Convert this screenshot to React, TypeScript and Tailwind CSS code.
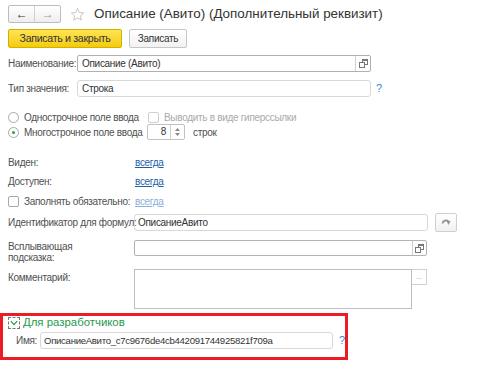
import React from 'react';

function OpenIcon() {
  return (
    <svg width="9" height="9" viewBox="0 0 9 9" className="block">
      <rect x="3.5" y="0.5" width="5" height="5" fill="none" stroke="#777" />
      <rect x="0.5" y="3.5" width="5" height="5" fill="#fff" stroke="#777" />
      <rect x="3" y="0" width="6" height="2" fill="#777" />
    </svg>
  );
}

function Radio({ checked }: { checked?: boolean }) {
  return (
    <span className="w-[11px] h-[11px] rounded-full border border-[#a8a8a8] bg-white flex items-center justify-center shrink-0">
      {checked && <span className="w-[3px] h-[3px] rounded-full bg-[#2aa04a]" />}
    </span>
  );
}

function Box({ faded }: { faded?: boolean }) {
  return (
    <span
      className={`w-[11px] h-[11px] rounded-[2px] border bg-white shrink-0 ${
        faded ? 'border-[#cfcfcf]' : 'border-[#a8a8a8]'
      }`}
    />
  );
}

function Help() {
  return <span className="text-[#3a8bd0] text-[11px] leading-none tracking-normal">?</span>;
}

export default function App() {
  return (
    <div
      className="w-[499px] h-[379px] bg-white text-[10px] tracking-[-0.3px] text-[#505050] overflow-hidden"
      style={{ fontFamily: '"Liberation Sans", Arial, sans-serif' }}
    >
      <div className="px-[8px] pt-[5px]">
        {/* Header */}
        <div className="flex items-center h-[18px]">
          <div className="flex h-[18px] border border-[#bdbdbd] rounded-[2px] bg-gradient-to-b from-white to-[#eeeeee]">
            <span className="w-[26px] flex items-center justify-center border-r border-[#d0d0d0] text-[#333] text-[12px] leading-none">
              ←
            </span>
            <span className="w-[25px] flex items-center justify-center text-[#9a9a9a] text-[12px] leading-none">
              →
            </span>
          </div>
          <svg width="15" height="15" viewBox="0 0 24 24" className="ml-[9px]">
            <path
              d="M12 2.5l2.9 6.3 6.9.7-5.2 4.6 1.5 6.8L12 17.4l-6.1 3.5 1.5-6.8-5.2-4.6 6.9-.7z"
              fill="none"
              stroke="#b9b9b9"
              strokeWidth="1.3"
              strokeLinejoin="round"
            />
          </svg>
          <span className="ml-[9px] text-[13.4px] tracking-normal text-[#333] whitespace-nowrap">
            Описание (Авито) (Дополнительный реквизит)
          </span>
        </div>

        {/* Toolbar */}
        <div className="flex mt-[6px] h-[19px] gap-[7px]">
          <button className="w-[114px] h-[19px] rounded-[2px] border border-[#d1b000] bg-gradient-to-b from-[#ffe44f] to-[#f4cb00] text-[#333] text-[10.6px] leading-none">
            Записать и закрыть
          </button>
          <button className="w-[58px] h-[19px] rounded-[2px] border border-[#c6c6c6] bg-gradient-to-b from-white to-[#f2f2f2] text-[#333] text-[10px] leading-none">
            Записать
          </button>
        </div>

        {/* Наименование */}
        <div className="flex items-center mt-[7px] h-[17px]">
          <span className="w-[69px] whitespace-nowrap">Наименование:</span>
          <div className="flex w-[294px] h-[17px] border border-[#b0b0b0] rounded-[2px]">
            <span className="flex-1 pl-[4px] text-[#333] leading-[15px]">Описание (Авито)</span>
            <span className="w-[15px] border-l border-[#d0d0d0] flex items-center justify-center">
              <OpenIcon />
            </span>
          </div>
        </div>

        {/* Тип значения */}
        <div className="flex items-center mt-[8px] h-[17px]">
          <span className="w-[69px] whitespace-nowrap">Тип значения:</span>
          <div className="w-[294px] h-[17px] border border-[#d8d8d8] rounded-[3px] pl-[4px] text-[#333] leading-[15px]">
            Строка
          </div>
          <span className="ml-[5px]">
            <Help />
          </span>
        </div>

        {/* Radio 1 */}
        <div className="flex items-center mt-[13px] h-[14px]">
          <Radio />
          <span className="ml-[5px] w-[124px] whitespace-nowrap">Однострочное поле ввода</span>
          <Box faded />
          <span className="ml-[5px] text-[#aaa] whitespace-nowrap">Выводить в виде гиперссылки</span>
        </div>

        {/* Radio 2 */}
        <div className="flex items-center h-[16px]">
          <Radio checked />
          <span className="ml-[5px] w-[123px] whitespace-nowrap">Многострочное поле ввода</span>
          <div className="flex w-[38px] h-[16px] border border-[#c2c2c2] rounded-[2px]">
            <span className="flex-1 text-right pr-[4px] text-[#333] leading-[14px]">8</span>
            <span className="w-[14px] border-l border-[#d0d0d0] flex flex-col items-center justify-center gap-[2px]">
              <svg width="5" height="3" viewBox="0 0 5 3">
                <path d="M0 3 L2.5 0 L5 3 Z" fill="#888" />
              </svg>
              <svg width="5" height="3" viewBox="0 0 5 3">
                <path d="M0 0 L2.5 3 L5 0 Z" fill="#888" />
              </svg>
            </span>
          </div>
          <span className="ml-[8px]">строк</span>
        </div>

        {/* Виден */}
        <div className="flex items-center mt-[14px] h-[16px]">
          <span className="w-[127px]">Виден:</span>
          <span className="text-[#1c5fa8] underline">всегда</span>
        </div>
        <div className="flex items-center mt-[3px] h-[16px]">
          <span className="w-[127px]">Доступен:</span>
          <span className="text-[#1c5fa8] underline">всегда</span>
        </div>
        <div className="flex items-center mt-[4px] h-[16px]">
          <Box />
          <span className="ml-[5px] w-[111px] whitespace-nowrap">Заполнять обязательно:</span>
          <span className="text-[#8eaedb] underline">всегда</span>
        </div>

        {/* Идентификатор */}
        <div className="flex items-center mt-[5px] h-[17px]">
          <span className="w-[126px] whitespace-nowrap">Идентификатор для формул:</span>
          <div className="w-[294px] h-[17px] border border-[#d8d8d8] rounded-[3px] pl-[3px] text-[#333] leading-[15px]">
            ОписаниеАвито
          </div>
          <span className="ml-[7px] w-[22px] h-[19px] border border-[#cfcfcf] rounded-[2px] bg-gradient-to-b from-white to-[#f1f1f1] flex items-center justify-center">
            <svg width="10" height="10" viewBox="0 0 10 10">
              <path d="M1.5 5.5 A3.5 3.5 0 0 1 7.5 3.5" fill="none" stroke="#8a9299" strokeWidth="1.8" />
              <path d="M5.5 3 L9.5 3 L7.5 7 Z" fill="#8a9299" />
            </svg>
          </span>
        </div>

        {/* Всплывающая подсказка */}
        <div className="flex mt-[9px]">
          <span className="w-[126px] leading-[11px] pt-[1px]">
            Всплывающая
            <br />
            подсказка:
          </span>
          <div className="flex w-[293px] h-[16px] border border-[#b3b3b3] rounded-[2px]">
            <span className="flex-1" />
            <span className="w-[14px] border-l border-[#d0d0d0] flex items-center justify-center">
              <OpenIcon />
            </span>
          </div>
        </div>

        {/* Комментарий */}
        <div className="flex mt-[6px]">
          <span className="w-[126px] pt-[1px]">Комментарий:</span>
          <div className="w-[278px] h-[40px] border border-[#bdbdbd]" />
          <span className="w-[15px] h-[16px] border border-l-0 border-[#d0d0d0] flex items-center justify-center text-[#aaa] text-[8px] leading-none">
            ...
          </span>
        </div>
      </div>

      {/* Для разработчиков */}
      <div className="mt-[4px] w-[348px] h-[47px] border-[3px] border-[#ec1c24] pl-[5px] pt-[1px]">
        <div className="flex items-center h-[12px]">
          <span className="w-[12px] h-[12px] border border-dashed border-[#777] flex items-center justify-center">
            <svg width="8" height="6" viewBox="0 0 8 6">
              <path d="M0.8 1.2 L4 4.6 L7.2 1.2" fill="none" stroke="#2a9a52" strokeWidth="1.2" />
            </svg>
          </span>
          <span className="ml-[3px] text-[11.4px] tracking-normal text-[#1f9a4d] leading-none">Для разработчиков</span>
        </div>
        <div className="flex items-center mt-[3px] h-[17px] pl-[8px]">
          <span className="w-[24px]">Имя:</span>
          <div className="w-[293px] h-[17px] border border-[#d8d8d8] rounded-[3px] pl-[3px] text-[#333] text-[9.6px] leading-[15px] whitespace-nowrap overflow-hidden">
            ОписаниеАвито_c7c9676de4cb442091744925821f709a
          </div>
          <span className="ml-[6px]">
            <Help />
          </span>
        </div>
      </div>
    </div>
  );
}
